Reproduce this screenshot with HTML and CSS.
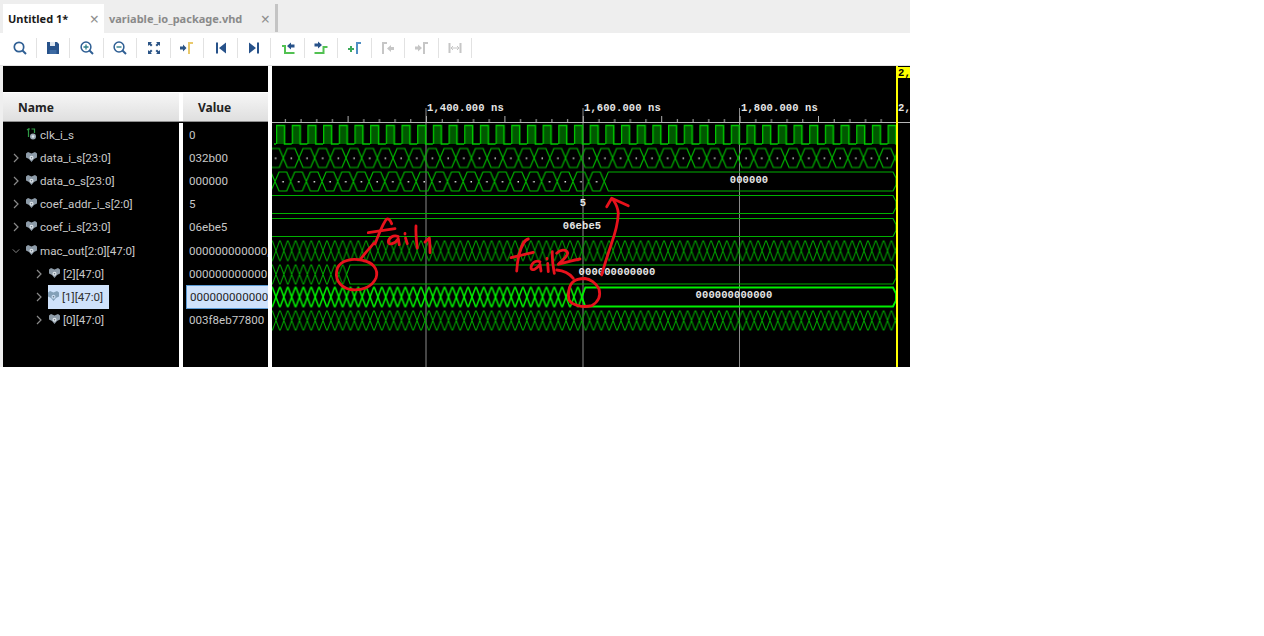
FILE: index.html
```html
<!DOCTYPE html>
<html lang="en">
<head>
<meta charset="utf-8">
<title>Waveform viewer</title>
<link rel="stylesheet" href="styles.css">
</head>
<body>
<svg class="defs" width="0" height="0" aria-hidden="true">
  <symbol id="bus" viewBox="0 0 11 10">
    <path d="M0 1.500 2 0 5.500 1.500 9 0l2 1.500V5.500L8 7 5.500 10 3 7 0 5.500Z" fill="#8d9ba8"/>
    <circle cx="5.500" cy="5.800" r="2" fill="#dfe5ea"/>
    <circle cx="5.500" cy="5.800" r=".8" fill="#6a7783"/>
  </symbol>
  <symbol id="busSel" viewBox="0 0 11 10">
    <path d="M0 1.500 2 0 5.500 1.500 9 0l2 1.500V5.500L8 7 5.500 10 3 7 0 5.500Z" fill="#84a0b8"/>
    <circle cx="5.500" cy="5.800" r="2" fill="#c9dcf2"/>
    <circle cx="5.500" cy="5.800" r=".8" fill="#6a7783"/>
  </symbol>
  <symbol id="wire" viewBox="0 0 10 12">
    <path d="M.5 2 2 1V9M3.500 1H2" fill="none" stroke="#2f9a45" stroke-width="1.200"/>
    <path d="M5 1H8V5" fill="none" stroke="#2f9a45" stroke-width="1.200"/>
    <circle cx="6.500" cy="8.500" r="3" fill="#9aa8b4"/>
    <circle cx="6.500" cy="8.500" r="1.200" fill="#e0e6ea"/>
  </symbol>
  <symbol id="chev" viewBox="0 0 8 10">
    <path d="M2 1 6 5 2 9" fill="none" stroke="#8a8a8a" stroke-width="1.200"/>
  </symbol>
  <symbol id="chevd" viewBox="0 0 10 8">
    <path d="M1 2 5 6 9 2" fill="none" stroke="#8a8a8a" stroke-width="1.200"/>
  </symbol>
</svg>

<div class="app">
  <div class="tabs">
    <div class="tab active"><span class="tab-label">Untitled 1*</span><span class="tab-close">×</span></div>
    <div class="tab"><span class="tab-label">variable_io_package.vhd</span><span class="tab-close">×</span></div>
    <div class="tab-end"></div>
  </div>

  <div class="toolbar">
    <div class="tool"><svg width="16" height="16" viewBox="0 0 16 16"><circle cx="7" cy="7" r="4.700" fill="none" stroke="#2f5f94" stroke-width="1.700"/><path d="M10.500 10.500 14 14" stroke="#2f5f94" stroke-width="2"/></svg></div>
    <div class="tool"><svg width="16" height="16" viewBox="0 0 16 16"><path d="M2 2H12L14 4V14H2Z" fill="#27528a"/><path d="M5 2H10V6H5Z" fill="#dfe7f0"/><path d="M4.500 10H11.500V14H4.500Z" fill="#3d6aa3"/></svg></div>
    <div class="tool"><svg width="16" height="16" viewBox="0 0 16 16"><circle cx="7" cy="7" r="4.900" fill="none" stroke="#2f5f94" stroke-width="1.500"/><path d="M10.500 10.500 14 14" stroke="#2f5f94" stroke-width="2"/><path d="M4.500 7H9.500M7 4.500V9.500" stroke="#2f7f8a" stroke-width="1.300"/></svg></div>
    <div class="tool"><svg width="16" height="16" viewBox="0 0 16 16"><circle cx="7" cy="7" r="4.900" fill="none" stroke="#2f5f94" stroke-width="1.500"/><path d="M10.500 10.500 14 14" stroke="#2f5f94" stroke-width="2"/><path d="M4.500 7H9.500" stroke="#2f7f8a" stroke-width="1.400"/></svg></div>
    <div class="tool"><svg width="16" height="16" viewBox="0 0 16 16"><path d="M2 2H6L4.700 3.300 6.500 5 5 6.500 3.300 4.700 2 6ZM14 2V6L12.700 4.700 11 6.500 9.500 5 11.300 3.300 10 2ZM2 14V10L3.300 11.300 5 9.500 6.500 11 4.700 12.700 6 14ZM14 14H10L11.300 12.700 9.500 11 11 9.500 12.700 11.300 14 10Z" fill="#2b5486"/></svg></div>
    <div class="tool"><svg width="16" height="16" viewBox="0 0 16 16"><path d="M1 6.500H4V4.500L7.500 8 4 11.500V9.500H1Z" fill="#2b5486"/><path d="M10 14V3H14" fill="none" stroke="#e9c96c" stroke-width="2"/></svg></div>
    <div class="tool"><svg width="16" height="16" viewBox="0 0 16 16"><path d="M3 2.500H5V13.500H3ZM13 2.500V13.500L6 8Z" fill="#27528a"/></svg></div>
    <div class="tool"><svg width="16" height="16" viewBox="0 0 16 16"><path d="M13 2.500H11V13.500H13ZM3 2.500V13.500L10 8Z" fill="#27528a"/></svg></div>
    <div class="tool"><svg width="16" height="16" viewBox="0 0 16 16"><path d="M2 6H5V13H14.500" fill="none" stroke="#52c152" stroke-width="2"/><path d="M14.500 4.500H11V2.500L7 6 11 9.500V7.500H14.500Z" fill="#27528a"/></svg></div>
    <div class="tool"><svg width="16" height="16" viewBox="0 0 16 16"><path d="M1.500 13H10.500V7H14.500" fill="none" stroke="#52c152" stroke-width="2"/><path d="M1.500 3.500H5V1.500L9 5 5 8.500V6.500H1.500Z" fill="#27528a"/></svg></div>
    <div class="tool"><svg width="16" height="16" viewBox="0 0 16 16"><path d="M1 9H7M4 6V12" stroke="#3caa5a" stroke-width="2"/><path d="M10 14V3H14" fill="none" stroke="#4f8fc4" stroke-width="2"/></svg></div>
    <div class="tool"><svg width="16" height="16" viewBox="0 0 16 16"><path d="M3 14V3H7" fill="none" stroke="#c6c6c6" stroke-width="2"/><path d="M14 7H11V5L7 8.500 11 12V10H14Z" fill="#c6c6c6"/></svg></div>
    <div class="tool"><svg width="16" height="16" viewBox="0 0 16 16"><path d="M1 6.500H4V4.500L8 8 4 11.500V9.500H1Z" fill="#c6c6c6"/><path d="M10 14V3H14" fill="none" stroke="#c6c6c6" stroke-width="2"/></svg></div>
    <div class="tool"><svg width="16" height="16" viewBox="0 0 16 16"><path d="M2.500 3V13M13.500 3V13" stroke="#c6c6c6" stroke-width="2"/><path d="M4 8H12M6 6 4 8 6 10M10 6 12 8 10 10" fill="none" stroke="#c6c6c6"/></svg></div>
  </div>

  <div class="panes">
    <div class="signals">
      <div class="band"></div>
      <div class="header">
        <div class="head-name">Name</div>
        <div class="head-value">Value</div>
      </div>
      <div class="body">
        <div class="names">
          <div class="row"><span class="chev-slot"></span><svg class="ico ico-wire"><use href="#wire"/></svg><span class="label">clk_i_s</span></div>
          <div class="row"><svg class="chev"><use href="#chev"/></svg><svg class="ico"><use href="#bus"/></svg><span class="label">data_i_s[23:0]</span></div>
          <div class="row"><svg class="chev"><use href="#chev"/></svg><svg class="ico"><use href="#bus"/></svg><span class="label">data_o_s[23:0]</span></div>
          <div class="row"><svg class="chev"><use href="#chev"/></svg><svg class="ico"><use href="#bus"/></svg><span class="label">coef_addr_i_s[2:0]</span></div>
          <div class="row"><svg class="chev"><use href="#chev"/></svg><svg class="ico"><use href="#bus"/></svg><span class="label">coef_i_s[23:0]</span></div>
          <div class="row"><svg class="chev"><use href="#chevd"/></svg><svg class="ico"><use href="#bus"/></svg><span class="label">mac_out[2:0][47:0]</span></div>
          <div class="row child"><svg class="chev"><use href="#chev"/></svg><svg class="ico"><use href="#bus"/></svg><span class="label">[2][47:0]</span></div>
          <div class="row child selected"><svg class="chev"><use href="#chev"/></svg><div class="sel-box"><svg class="ico"><use href="#busSel"/></svg><span class="label">[1][47:0]</span></div></div>
          <div class="row child"><svg class="chev"><use href="#chev"/></svg><svg class="ico"><use href="#bus"/></svg><span class="label">[0][47:0]</span></div>
        </div>
        <div class="values">
          <div class="val">0</div>
          <div class="val">032b00</div>
          <div class="val">000000</div>
          <div class="val">5</div>
          <div class="val">06ebe5</div>
          <div class="val">000000000000,</div>
          <div class="val">000000000000</div>
          <div class="val val-selected">000000000000</div>
          <div class="val">003f8eb77800</div>
        </div>
      </div>
    </div>

    <div class="wave-pane">
      <svg class="waves" width="638" height="301" viewBox="272 66 638 301">
        <defs>
          <pattern id="ticks" patternUnits="userSpaceOnUse" x="426" y="114" width="78.4" height="8">
            <path d="M.5 2V8M16.180 5V8M31.860 5V8M47.540 5V8M63.220 5V8" stroke="#b0b0b0" fill="none"/>
          </pattern>
          <pattern id="clk" patternUnits="userSpaceOnUse" x="276" y="124" width="15.680" height="21">
            <path d="M.5 1.500H8.500V20H.5Z" fill="#005800"/>
            <path d="M.5 20V1.500H8.500V20H15.680" fill="none" stroke="#00c800" stroke-width="1.500"/>
          </pattern>
          <pattern id="hexI" patternUnits="userSpaceOnUse" x="283.300" y="147.500" width="15.680" height="21">
            <path d="M-4 1 4 20H11.680L19.680 1M-4 20 4 1H11.680L19.680 20" fill="none" stroke="#00b800" stroke-width="1.200"/>
            <rect x="7.340" y="10" width="1.500" height="1.500" fill="#e0e0e0"/>
          </pattern>
          <pattern id="hexO" patternUnits="userSpaceOnUse" x="275" y="171" width="15.680" height="21">
            <path d="M-4 1 4 20H11.680L19.680 1M-4 20 4 1H11.680L19.680 20" fill="none" stroke="#00b800" stroke-width="1.200"/>
            <rect x="7.340" y="10" width="1.500" height="1.500" fill="#e0e0e0"/>
          </pattern>
          <pattern id="macA" patternUnits="userSpaceOnUse" x="276" y="240" width="7.840" height="21.500">
            <path d="M-3.500 1 3.500 20.500H4.340L11.340 1M-3.500 20.500 3.500 1H4.340L11.340 20.500" fill="none" stroke="#00a800" stroke-width="1"/>
          </pattern>
          <pattern id="mac2" patternUnits="userSpaceOnUse" x="276" y="264" width="7.840" height="21">
            <path d="M-3.500 1 3.500 20H4.340L11.340 1M-3.500 20 3.500 1H4.340L11.340 20" fill="none" stroke="#00a800" stroke-width="1"/>
          </pattern>
          <pattern id="mac1" patternUnits="userSpaceOnUse" x="276" y="286.500" width="7.840" height="21">
            <path d="M-3.500 1 3.500 20H4.340L11.340 1M-3.500 20 3.500 1H4.340L11.340 20" fill="none" stroke="#00f000" stroke-width="1.500"/>
          </pattern>
          <pattern id="mac0" patternUnits="userSpaceOnUse" x="276" y="310" width="7.840" height="21">
            <path d="M-3.500 1 3.500 20H4.340L11.340 1M-3.500 20 3.500 1H4.340L11.340 20" fill="none" stroke="#00a800" stroke-width="1"/>
          </pattern>
        </defs>

        <path class="grid" d="M426 108V367M583 108V367M739.500 108V367"/>
        <path class="axis" d="M272 122.500H910"/>
        <rect x="272" y="114" width="624" height="8" fill="url(#ticks)"/>

        <text class="mono" x="427" y="111">1,400.000 ns</text>
        <text class="mono" x="584" y="111">1,600.000 ns</text>
        <text class="mono" x="741" y="111">1,800.000 ns</text>
        <text class="mono" x="898" y="111">2,</text>

        <rect x="274" y="124" width="622" height="21" fill="url(#clk)"/>
        <rect x="272" y="147.500" width="624" height="21" fill="url(#hexI)"/>
        <rect x="272" y="171" width="332.300" height="21" fill="url(#hexO)"/>
        <path class="bus" d="M604.300 181.500 608.300 172H893L896 178V185L893 191H608.300Z"/>
        <path class="bus" d="M272 195.500H893L896 201.500V207.500L893 213.500H272"/>
        <path class="bus" d="M272 218.500H893L896 224.500V230.500L893 236.500H272"/>
        <rect x="272" y="240" width="624" height="21.500" fill="url(#macA)"/>
        <rect x="272" y="264" width="74.600" height="21" fill="url(#mac2)"/>
        <path class="bus" d="M346.600 274.500 350.100 265H893L896 271V278L893 284H350.100Z"/>
        <rect x="272" y="286.500" width="310" height="21" fill="url(#mac1)"/>
        <path class="bus-sel" d="M581.800 297 585.300 287.500H893L896 293.500V300.500L893 306.500H585.300Z"/>
        <rect x="272" y="310" width="624" height="21" fill="url(#mac0)"/>

        <text class="mono" x="749" y="183" text-anchor="middle">000000</text>
        <text class="mono" x="583" y="206" text-anchor="middle">5</text>
        <text class="mono" x="582" y="229" text-anchor="middle">06ebe5</text>
        <text class="mono" x="617" y="275" text-anchor="middle">000000000000</text>
        <text class="mono" x="734" y="298" text-anchor="middle">000000000000</text>

        <rect x="897" y="67" width="13" height="11" fill="#ffff00"/>
        <text class="mono cursor-text" x="898" y="76">2,</text>
        <path class="cursor" d="M897 66V367"/>

        <g class="ink">
          <path d="M361 258.500C366 252 370 248 373.500 243.500"/>
          <path d="M363 260.500C352 258 341 260 337.500 268 334 278 339 287 350 289.500 362 291 372 287 376 278 379 269 372 262 363 260.500Z"/>
          <path d="M391.700 223.700C390 219 387.500 217.500 385.500 220.500 382 226 378 236 375 244"/>
          <path d="M368.300 232.700 395 228.700"/>
          <path d="M398.300 236.500C393 234.500 388.500 238 388.300 242 388.500 245.500 395 244 398.300 238.700L399.300 244.700"/>
          <path d="M405.500 238 407.300 243.700M405 233.500V234"/>
          <path d="M416 226C415.500 234 416.500 241 417.300 248"/>
          <path d="M425 242 429.300 238C430 243 430 248 430 252.700"/>

          <path d="M528.300 239C523 240 521 248 519 255 517.500 261 517 266 516.700 271"/>
          <path d="M511 257.700 533.300 252.300"/>
          <path d="M540 261.700C535 259.500 531 264 531 268 532 271.500 537 269 540 264.300L541 271"/>
          <path d="M547.700 263.300 548.300 271.700M547 258.500V259"/>
          <path d="M552.300 251.700C552 258 553 266 554.300 273.300"/>
          <path d="M556.700 253.300C560 250 566 248.500 567.700 253 567 258 561 261 558.300 264.300 565 263 573 260 580 259"/>
          <path d="M556.700 270C563 270.500 569 273 573.300 278.300"/>
          <path d="M573.300 281.700C569 285 567.500 294 569 300 572 305 582 308 591.700 305.700 598 302 601 296 599 289 596 283 590 279 585 278.500 580 278.500 576 279 573.300 281.700Z"/>

          <path d="M601.700 275C604 266 608 254 611 245 615 234 618 224 618.300 213.300 618 208 616 204 613.300 200"/>
          <path d="M606.700 206.700 611.700 198.300 628.300 205.700"/>
        </g>
      </svg>
    </div>
  </div>
</div>
</body>
</html>
```
FILE: styles.css
```css
html, body {
  margin: 0;
  padding: 0;
  background: #fff;
}

body {
  font-family: "Roboto", "Liberation Sans", sans-serif;
  font-size: 11.6px;
}

.defs {
  position: absolute;
}

.app {
  width: 910px;
  height: 367px;
  display: flex;
  flex-direction: column;
  overflow: hidden;
  background: #fff;
}

/* tabs */
.tabs {
  height: 29px;
  padding: 4px 0 0 3px;
  display: flex;
  background: #eeeeee;
}

.tab {
  width: 101px;
  display: flex;
  align-items: center;
  justify-content: space-between;
  padding: 0 5px;
  box-sizing: border-box;
  font-family: "Noto Sans", sans-serif;
  font-weight: 700;
  font-size: 11px;
  color: #8a8a8a;
  white-space: nowrap;
}

.tab + .tab {
  width: 171px;
}

.tab.active {
  background: #fff;
  color: #1a1a1a;
}

.tab-close {
  font-weight: 400;
  font-size: 16px;
  color: #8f8f8f;
}

.tab-end {
  width: 3px;
  margin-bottom: 1px;
  background: #c4c4c4;
}

/* toolbar */
.toolbar {
  height: 30px;
  padding: 0 0 2px 3px;
  display: flex;
  align-items: center;
  background: #fff;
  border-bottom: 1px solid #e4e4e4;
}

.tool {
  width: 33.5px;
  height: 20px;
  box-sizing: border-box;
  display: flex;
  align-items: center;
  justify-content: center;
  border-right: 1px solid #e2e2e2;
  padding-left: 1px;
}

/* panes */
.panes {
  flex: 1;
  min-height: 0;
  display: flex;
  gap: 4px;
  padding-left: 3px;
  background: linear-gradient(90deg, #efefef 3px, #fff 3px);
}

.signals {
  width: 265px;
  display: flex;
  flex-direction: column;
}

.band {
  height: 26px;
  background: #000;
}

.header {
  height: 30px;
  display: flex;
  gap: 4px;
  box-sizing: border-box;
  border-top: 1px solid #fff;
  border-bottom: 1px solid #8e8e8e;
  background: #fff;
  font-family: "Noto Sans", sans-serif;
  font-size: 12px;
  font-weight: 700;
  color: #222;
}

.head-name,
.head-value {
  display: flex;
  align-items: center;
  background: linear-gradient(#f6f6f6, #dfdfdf);
}

.head-name {
  width: 176px;
  padding-left: 15px;
  box-sizing: border-box;
}

.head-value {
  flex: 1;
  padding-left: 15px;
}

.body {
  flex: 1;
  display: flex;
  gap: 4px;
  min-height: 0;
  padding-top: 1px;
  background: linear-gradient(#000 1px, #fff 1px);
}

.names {
  width: 176px;
  background: #000;
}

.values {
  flex: 1;
  min-width: 0;
  background: #000;
}

.row,
.val {
  height: 23.2px;
  display: flex;
  align-items: center;
  color: #c8c8c8;
  white-space: nowrap;
}

.row {
  padding-left: 9px;
}

.row.child {
  padding-left: 32px;
}

.chev-slot,
.chev {
  flex: none;
  width: 8px;
  height: 10px;
  margin-right: 6px;
}

.ico {
  flex: none;
  width: 11px;
  height: 10px;
  margin-right: 3px;
  margin-top: -2px;
}

.ico-wire {
  height: 12px;
}

.sel-box {
  height: 23.2px;
  display: flex;
  align-items: center;
  width: 61px;
  margin-left: -1px;
  background: #cfe2fb;
  box-sizing: border-box;
}

.sel-box .label {
  color: #303030;
}

.val {
  padding-left: 6px;
  overflow: hidden;
}

.val-selected {
  margin-left: 3px;
  padding-left: 3px;
  box-sizing: border-box;
  background: #cfe2fb;
  border: 1px solid #5b9bd5;
  border-right: 0;
  color: #1f1f1f;
}

/* waveform */
.wave-pane {
  flex: 1;
  min-width: 0;
  background: #000;
}

.waves {
  display: block;
}

.grid {
  stroke: #8a8a8a;
  stroke-width: 1;
  fill: none;
}

.axis {
  stroke: #b8b8b8;
  stroke-width: 1;
}

.mono {
  font-family: "Liberation Mono", monospace;
  font-size: 10.5px;
  font-weight: 700;
  letter-spacing: 0.1px;
  fill: #e6e6e6;
}

.cursor-text {
  fill: #000;
}

.bus {
  fill: none;
  stroke: #00b000;
  stroke-width: 1.1;
}

.bus-sel {
  fill: none;
  stroke: #00f000;
  stroke-width: 1.9;
}

.cursor {
  stroke: #ffff00;
  stroke-width: 2;
  fill: none;
}

.ink path {
  fill: none;
  stroke: #e8121c;
  stroke-width: 2.8;
  stroke-linecap: round;
  stroke-linejoin: round;
}
```
